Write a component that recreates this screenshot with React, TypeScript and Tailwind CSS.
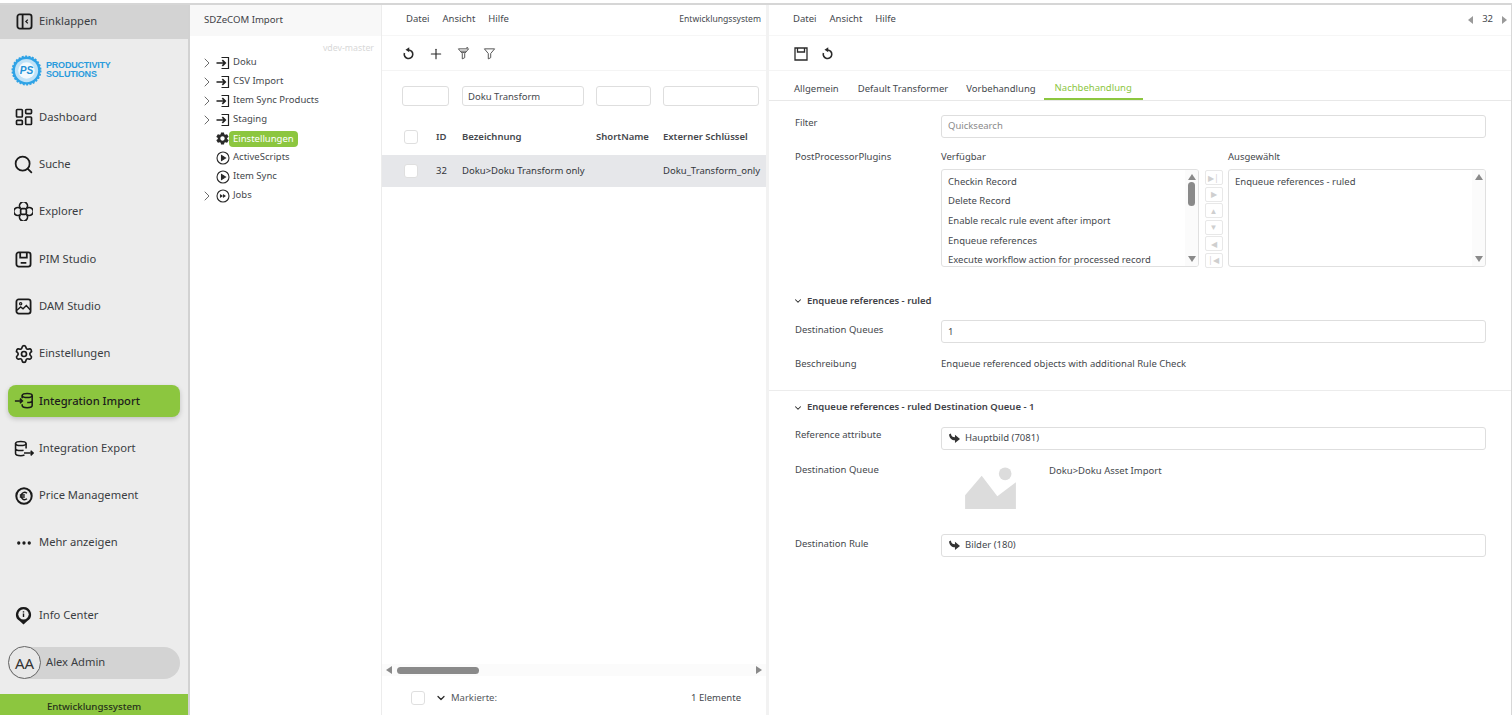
import React from 'react';
import { ChevronDown, ChevronRight, Ellipsis, LayoutDashboard, Plus, Search, Settings } from 'lucide-react';
import { IoMdSettings } from 'react-icons/io';

const FONT = "font-['Noto_Sans','Open_Sans',sans-serif]";

const PanelIcon = () => (
  <svg viewBox="0 0 18 18" className="w-[17px] h-[17px]" fill="none" stroke="#1a1a1a" strokeWidth="1.9">
    <rect x="1.5" y="1.5" width="15" height="15" rx="2.5" />
    <path d="M7 2v14" />
    <path d="M12.5 7 10.5 9l2 2" strokeWidth="1.4" />
  </svg>
);

const ExplorerIcon = () => (
  <svg viewBox="0 0 20 20" className="w-[19px] h-[19px]" fill="none" stroke="#1a1a1a" strokeWidth="1.8">
    <path d="M7 7A4.200 4.200 0 1 1 13 7 4.200 4.200 0 1 1 13 13 4.200 4.200 0 1 1 7 13 4.200 4.200 0 1 1 7 7Z" />
    <rect x="7" y="7" width="6" height="6" rx="1.500" />
  </svg>
);

const PimIcon = () => (
  <svg viewBox="0 0 18 18" className="w-[17px] h-[17px]" fill="none" stroke="#1a1a1a" strokeWidth="1.9">
    <rect x="1.5" y="1.5" width="15" height="15" rx="2.5" />
    <path d="M5.5 2v5h7V2M6 12.5h6" />
  </svg>
);

const DamIcon = () => (
  <svg viewBox="0 0 18 18" className="w-[17px] h-[17px]" fill="none" stroke="#1a1a1a" strokeWidth="1.9">
    <rect x="1.5" y="1.5" width="15" height="15" rx="2.5" />
    <circle cx="6" cy="6" r="1.2" strokeWidth="1.3" />
    <path d="m2 13 4-3.5 2.5 2L12 8l4 4.5" strokeWidth="1.5" />
  </svg>
);

const ImportIcon = () => (
  <svg viewBox="0 0 22 18" className="w-[20px] h-[17px]" fill="none" stroke="#1a1a1a" strokeWidth="1.7">
    <ellipse cx="14.5" cy="3.5" rx="5.5" ry="2.3" />
    <path d="M9 3.5v3M20 3.5v11c0 1.4-2.5 2.4-5.5 2.4S9 15.9 9 14.5v-1.5M20 9c0 1.3-2.5 2.3-5.5 2.3" />
    <path d="M1 9.5h8M6.5 7l2.7 2.5L6.500 12" />
  </svg>
);

const ExportIcon = () => (
  <svg viewBox="0 0 22 18" className="w-[20px] h-[17px]" fill="none" stroke="#1a1a1a" strokeWidth="1.7">
    <ellipse cx="7.5" cy="3.5" rx="5.8" ry="2.3" />
    <path d="M1.7 3.5v11c0 1.4 2.6 2.4 5.8 2.4 1.600 0 3-.3 4-.7M13.3 3.5V9M1.7 9c0 1.3 2.6 2.3 5.8 2.3 1.200 0 2.200-.1 3-.4" />
    <path d="M11 14h10M18.300 11.500 21 14l-2.700 2.500" />
  </svg>
);

const EuroIcon = () => (
  <svg viewBox="0 0 18 18" className="w-[18px] h-[18px]" fill="none" stroke="#1a1a1a">
    <circle cx="9" cy="9" r="7.700" strokeWidth="2" />
    <path d="M12 6.200a3.600 3.600 0 1 0 0 5.600M4.800 8h5M4.800 10h5" strokeWidth="1.300" />
  </svg>
);

const InfoPin = () => (
  <svg viewBox="0 0 18 20" className="w-[17px] h-[19px]" fill="none">
    <path d="M9 1a8 8 0 0 0-4 14.900L9 19.500l4-3.600A8 8 0 0 0 9 1Z" fill="#1a1a1a" />
    <circle cx="9" cy="8.800" r="5.500" fill="#ececec" />
    <path d="M9 8v3.700M9 5.500v1.200" stroke="#1a1a1a" strokeWidth="1.500" />
  </svg>
);

const RefreshIcon = () => (
  <svg viewBox="0 0 14 14" className="w-[13px] h-[13px]" fill="none" stroke="#2a2a2a" strokeWidth="1.700">
    <path d="M7 3.200a4.600 4.600 0 1 1-4.400 3.300" />
    <path d="M7.800 .3v5.400L3.800 3Z" fill="#2a2a2a" stroke="none" />
  </svg>
);

const SaveIcon = () => (
  <svg viewBox="0 0 14 14" className="w-[14px] h-[14px]" fill="none" stroke="#2a2a2a" strokeWidth="1.300">
    <path d="M1 1h12v12H1Z" />
    <path d="M3.500 1v4h7V1" />
  </svg>
);

const Logo = () => (
  <div className="flex items-center gap-[4px] pl-[11px]">
    <svg viewBox="0 0 32 32" className="w-[31px] h-[31px]">
      <circle cx="16" cy="16" r="14.500" fill="#2fa3e6" stroke="#2fa3e6" strokeWidth="2" strokeDasharray="2 1.500" />
      <circle cx="16" cy="16" r="12" fill="#bfe2f7" />
      <circle cx="16" cy="16" r="8.500" fill="#f2f9fd" />
      <text x="16" y="20" textAnchor="middle" fontSize="10.500" fontWeight="700" fontStyle="italic" fill="#2291d6" fontFamily="Liberation Sans, sans-serif">PS</text>
    </svg>
    <div className="font-['Liberation_Sans',sans-serif] text-[9px] leading-[9px] tracking-[-0.2px] font-bold text-[#2a9bdc]">
      <div>PRODUCTIVITY</div>
      <div>SOLUTIONS</div>
    </div>
  </div>
);

const NAV_ITEMS: { label: string; icon: React.ReactNode; active?: boolean }[] = [
  { label: 'Dashboard', icon: <LayoutDashboard size={20} strokeWidth={2} color="#1a1a1a" /> },
  { label: 'Suche', icon: <Search size={21} strokeWidth={2} color="#1a1a1a" /> },
  { label: 'Explorer', icon: <ExplorerIcon /> },
  { label: 'PIM Studio', icon: <PimIcon /> },
  { label: 'DAM Studio', icon: <DamIcon /> },
  { label: 'Einstellungen', icon: <Settings size={20} strokeWidth={2} color="#1a1a1a" /> },
  { label: 'Integration Import', icon: <ImportIcon />, active: true },
  { label: 'Integration Export', icon: <ExportIcon /> },
  { label: 'Price Management', icon: <EuroIcon /> },
  { label: 'Mehr anzeigen', icon: <Ellipsis size={18} strokeWidth={2.4} color="#1a1a1a" /> },
];

const NavItem = ({ label, icon, active }: { label: string; icon: React.ReactNode; active?: boolean }) => (
  <div className="h-[47.3px] flex items-center px-2 shrink-0">
    <div
      className={`flex items-center h-8 w-full rounded-lg ${
        active ? 'bg-[#8cc63f] shadow-[0_2px_5px_rgba(0,0,0,0.18)] font-medium text-[#1c1c1c]' : 'text-[#3a3d42]'
      }`}
    >
      <span className="w-[31px] flex justify-center shrink-0">{icon}</span>
      <span className="text-[11.2px]">{label}</span>
    </div>
  </div>
);

const Sidebar = () => (
  <aside className="w-[190px] shrink-0 bg-[#ececec] border-r-2 border-[#d2d2d2] flex flex-col">
    <div className="h-[33.5px] bg-[#d3d3d3] flex items-center pl-[16px] gap-[6px] text-[11.2px] text-[#3a3d42] shrink-0">
      <PanelIcon />
      <span>Einklappen</span>
    </div>
    <div className="h-[55px] pt-[8px] flex items-center shrink-0">
      <Logo />
    </div>
    {NAV_ITEMS.map((item) => (
      <NavItem key={item.label} {...item} />
    ))}
    <div className="mt-[25px]">
      <NavItem label="Info Center" icon={<InfoPin />} />
    </div>
    <div className="mt-[8px] mx-2 h-8 rounded-full bg-[#d3d3d3] flex items-center shrink-0">
      <span className="w-[33px] h-[33px] rounded-full border border-[#666] flex items-center justify-center text-[15px] text-[#333] shrink-0 bg-[#e8e8e8]">
        AA
      </span>
      <span className="ml-[5px] text-[11.2px] text-[#3a3d42]">Alex Admin</span>
    </div>
    <div className="mt-auto h-[21px] pt-[5px] bg-[#8cc63f] flex items-center justify-center text-[9.7px] font-medium text-[#26301a] shrink-0">
      Entwicklungssystem
    </div>
  </aside>
);

const TREE: { label: string; icon: 'in' | 'gear' | 'play' | 'ff'; arrow?: boolean; active?: boolean }[] = [
  { label: 'Doku', icon: 'in', arrow: true },
  { label: 'CSV Import', icon: 'in', arrow: true },
  { label: 'Item Sync Products', icon: 'in', arrow: true },
  { label: 'Staging', icon: 'in', arrow: true },
  { label: 'Einstellungen', icon: 'gear', active: true },
  { label: 'ActiveScripts', icon: 'play' },
  { label: 'Item Sync', icon: 'play' },
  { label: 'Jobs', icon: 'ff', arrow: true },
];

const TreeIcon = ({ type }: { type: string }) => {
  if (type === 'in')
    return (
      <svg viewBox="0 0 14 14" className="w-[14px] h-[14px]" fill="none" stroke="#222">
        <path d="M5.500 1.500h7v11h-7" strokeWidth="1.200" />
        <path d="M.5 7h8.500M6.300 4.200 9.200 7l-2.900 2.800" strokeWidth="1.700" />
      </svg>
    );
  if (type === 'gear') return <IoMdSettings size={17} color="#2a2a2a" />;
  return (
    <svg viewBox="0 0 14 14" className="w-[14px] h-[14px]" fill="none" stroke="#2a2a2a" strokeWidth="1.100">
      <circle cx="7" cy="7" r="6" />
      {type === 'play' ? (
        <path d="M5.500 4.500 9.500 7l-4 2.500Z" fill="#2a2a2a" />
      ) : (
        <path d="M4.500 6 6 7 4.500 8ZM7.500 6 9 7 7.500 8Z" fill="#2a2a2a" />
      )}
    </svg>
  );
};

const TreePanel = () => (
  <section className="w-[192px] shrink-0 bg-white border-r border-[#ececec] flex flex-col">
    <div className="h-[31px] bg-[#f8f8f8] flex items-center pl-[14px] text-[9.6px] text-[#3f4247] shrink-0">
      SDZeCOM Import
    </div>
    <div className="h-[19px] flex items-end justify-end pr-[7px] text-[8.8px] text-[#d8d8d8] shrink-0">vdev-master</div>
    <ul className="-mt-[2px] pl-[13px]">
      {TREE.map((node) => (
        <li key={node.label} className="h-[19px] flex items-center text-[9.500px] text-[#45484d]">
          <span className="w-[12px] flex justify-start shrink-0">
            {node.arrow && <ChevronRight size={16} strokeWidth={1.300} color="#555" className="-ml-[4px]" />}
          </span>
          <span className="w-[15px] flex justify-center shrink-0">
            <TreeIcon type={node.icon} />
          </span>
          <span
            className={
              node.active
                ? '-ml-[1px] px-1 h-[16px] leading-[16px] rounded-sm bg-[#8cc63f] text-white'
                : 'ml-[3px]'
            }
          >
            {node.label}
          </span>
        </li>
      ))}
    </ul>
  </section>
);

const Checkbox = ({ className = '' }: { className?: string }) => (
  <span className={`block w-[14px] h-[14px] rounded-[3px] bg-white border border-[#dfdfdf] ${className}`} />
);

const MenuBar = ({ right }: { right: React.ReactNode }) => (
  <div className="h-[31px] pb-[1px] flex items-center justify-between border-b border-[#f6f6f6] text-[9.500px] text-[#45484d] shrink-0">
    <div className="flex gap-[13px] pl-[24px]">
      <span>Datei</span>
      <span>Ansicht</span>
      <span>Hilfe</span>
    </div>
    {right}
  </div>
);

const FilterIcon = ({ spark }: { spark?: boolean }) => (
  <svg viewBox="0 0 14 14" className="w-[13px] h-[13px]" fill="none" stroke="#4a4a4a" strokeWidth="1">
    <path d="M1.500 2h11L8.300 7v4.500l-2.600 1.300V7Z" />
    {spark && <path d="M4 4.500h6M5.500 6h3M10 1l2-1" />}
  </svg>
);

const TABLE_COLS = 'grid grid-cols-[80px_134px_67px_1fr] items-center';

const ListPanel = () => (
  <section className="w-[384px] shrink-0 bg-white flex flex-col">
    <MenuBar right={<span className="pr-[5px] text-[8.600px]">Entwicklungssystem</span>} />
    <div className="h-[35px] pt-[1px] flex items-center gap-[13px] pl-[20px] border-b border-[#f4f4f4] shrink-0">
      <RefreshIcon />
      <Plus size={16} strokeWidth={1.700} color="#2a2a2a" />
      <FilterIcon spark />
      <FilterIcon />
    </div>
    <div className={`${TABLE_COLS} pt-[13px] shrink-0`}>
      <div className="pl-[20px]">
        <input className="w-[47px] h-[20px] rounded-[3px] border border-[#dedede] bg-white" />
      </div>
      <input
        readOnly
        value="Doku Transform"
        className="w-[122px] h-[20px] rounded-[3px] border border-[#dedede] px-[5px] text-[9.500px] text-[#45484d] outline-none"
      />
      <input className="w-[55px] h-[20px] rounded-[3px] border border-[#dedede]" />
      <input className="w-[96px] h-[20px] rounded-[3px] border border-[#dedede]" />
    </div>
    <div className={`${TABLE_COLS} h-[47px] pt-[11px] text-[9.500px] font-semibold text-[#45484d] shrink-0`}>
      <div className="flex items-center pl-[22px] gap-[18px]">
        <Checkbox />
        <span>ID</span>
      </div>
      <span>Bezeichnung</span>
      <span>ShortName</span>
      <span>Externer Schlüssel</span>
    </div>
    <div className={`${TABLE_COLS} h-[32px] bg-[#e6e7ea] text-[9.500px] text-[#33363b] shrink-0`}>
      <div className="flex items-center pl-[22px] gap-[18px]">
        <Checkbox />
        <span>32</span>
      </div>
      <span>Doku&gt;Doku Transform only</span>
      <span />
      <span>Doku_Transform_only</span>
    </div>
    <div className="flex-1" />
    <div className="h-[12px] flex items-center gap-[5px] px-1 bg-[#fbfbfb] shrink-0">
      <span className="w-0 h-0 border-y-[4px] border-y-transparent border-r-[6px] border-r-[#8a8a8a]" />
      <span className="w-[82px] h-[7px] rounded-full bg-[#8a8a8a]" />
      <span className="flex-1" />
      <span className="w-0 h-0 border-y-[4px] border-y-transparent border-l-[6px] border-l-[#8a8a8a]" />
    </div>
    <div className="h-[39px] pt-[5px] flex items-center pl-[29px] pr-[25px] text-[9.500px] text-[#55585d] shrink-0">
      <Checkbox />
      <ChevronDown size={12} strokeWidth={2.500} color="#2a2a2a" className="ml-[10px]" />
      <span className="ml-[4px]">Markierte:</span>
      <span className="ml-auto text-[#45484d]">1 Elemente</span>
    </div>
  </section>
);

const Label = ({ children, className = '' }: { children: React.ReactNode; className?: string }) => (
  <div className={`w-[146px] shrink-0 text-[9.500px] text-[#45484d] ${className}`}>{children}</div>
);

const TextBox = ({ children, muted }: { children?: React.ReactNode; muted?: boolean }) => (
  <div
    className={`flex-1 h-[23px] rounded-[3px] border border-[#dedede] flex items-center px-[6px] text-[9.500px] ${
      muted ? 'text-[#8a8a8a]' : 'text-[#45484d]'
    }`}
  >
    {children}
  </div>
);

const RefArrow = () => (
  <svg viewBox="0 0 14 12" className="w-[13px] h-[11px] mr-[4px]" fill="#333">
    <path d="M1 1.500 3 .5c.5 3 1.800 4 4.500 4.200V2L13 6.500 7.500 11V8C4 8 1.500 5.500 1 1.500Z" />
  </svg>
);

const Triangle = ({ dir }: { dir: 'up' | 'down' }) => (
  <span
    className={`w-0 h-0 border-x-[4px] border-x-transparent ${
      dir === 'up' ? 'border-b-[6px] border-b-[#8a8a8a]' : 'border-t-[6px] border-t-[#8a8a8a]'
    }`}
  />
);

const PLUGINS = [
  'Checkin Record',
  'Delete Record',
  'Enable recalc rule event after import',
  'Enqueue references',
  'Execute workflow action for processed record',
];

const ListBox = ({ items, thumb }: { items: string[]; thumb?: boolean }) => (
  <div className="h-[98px] rounded-[3px] border border-[#e0e0e0] flex overflow-hidden text-[9.500px] text-[#45484d]">
    <div className="flex-1 pl-[6px] pt-[2px]">
      {items.map((item) => (
        <div key={item} className="h-[19.700px] flex items-center">
          {item}
        </div>
      ))}
    </div>
    <div className="w-[13px] bg-[#fbfbfb] flex flex-col items-center justify-between py-[4px]">
      <Triangle dir="up" />
      {thumb && <span className="w-[7px] h-[24px] rounded-full bg-[#8a8a8a] mb-auto mt-[2px]" />}
      <Triangle dir="down" />
    </div>
  </div>
);

const MoveButton = ({ glyph }: { glyph: string }) => (
  <span className="w-[18px] h-[15px] rounded-[2px] border border-[#e8e8e8] flex items-center justify-center text-[8px] leading-none text-[#cfcfcf]">
    {glyph}
  </span>
);

const SectionTitle = ({ children }: { children: React.ReactNode }) => (
  <div className="flex items-center gap-[4px] -ml-[2px] text-[9.500px] font-semibold text-[#3f4247]">
    <ChevronDown size={10} strokeWidth={2.500} color="#2a2a2a" />
    <span>{children}</span>
  </div>
);

const DetailPanel = () => (
  <section className="flex-1 bg-white border-l-[3px] border-[#f2f2f2] border-r border-r-[#d8d8d8] flex flex-col">
    <MenuBar
      right={
        <div className="flex items-center gap-[9px] pr-[4px] text-[9.500px]">
          <span className="w-0 h-0 border-y-[4px] border-y-transparent border-r-[5px] border-r-[#9a9a9a]" />
          <span>32</span>
          <span className="w-0 h-0 border-y-[4px] border-y-transparent border-l-[5px] border-l-[#9a9a9a]" />
        </div>
      }
    />
    <div className="h-[35px] pt-[1px] flex items-center gap-[13px] pl-[25px] border-b border-[#f4f4f4] shrink-0">
      <SaveIcon />
      <RefreshIcon />
    </div>
    <div className="h-[30px] flex items-end pl-[16px] border-b border-[#e8e8e8] text-[9.500px] text-[#45484d] shrink-0">
      <span className="h-full flex items-center pt-[7px] px-[9px]">Allgemein</span>
      <span className="h-full flex items-center pt-[7px] px-[9px] ml-[1px]">Default Transformer</span>
      <span className="h-full flex items-center pt-[7px] px-[9px]">Vorbehandlung</span>
      <span className="h-full flex items-center pt-[7px] px-[11px] -ml-[1px] text-[#8cc63f] border-b-2 border-[#8cc63f]">Nachbehandlung</span>
    </div>

    <div className="pl-[26px] pr-[25px] pt-[14px]">
      <div className="flex items-start">
        <Label className="pt-[1px]">Filter</Label>
        <TextBox muted>Quicksearch</TextBox>
      </div>
      <div className="flex items-start mt-[12px]">
        <Label>PostProcessorPlugins</Label>
        <div className="flex-1 grid grid-cols-[258px_29px_1fr]">
          <div className="text-[9.500px] text-[#45484d] h-[19px]">Verfügbar</div>
          <div />
          <div className="text-[9.500px] text-[#45484d] h-[19px]">Ausgewählt</div>
          <ListBox items={PLUGINS} thumb />
          <div className="flex flex-col items-center gap-[1.600px] pt-[1px]">
            <MoveButton glyph="▶|" />
            <MoveButton glyph="▶" />
            <MoveButton glyph="▲" />
            <MoveButton glyph="▼" />
            <MoveButton glyph="◀" />
            <MoveButton glyph="|◀" />
          </div>
          <ListBox items={['Enqueue references - ruled']} />
        </div>
      </div>
    </div>

    <div className="pl-[26px] pr-[25px] pt-[26px] pb-[19px] border-b border-[#ececec]">
      <SectionTitle>Enqueue references - ruled</SectionTitle>
      <div className="flex items-start mt-[12px]">
        <Label className="pt-[3px]">Destination Queues</Label>
        <TextBox>1</TextBox>
      </div>
      <div className="flex items-start mt-[14px] text-[9.500px] text-[#45484d]">
        <Label>Beschreibung</Label>
        <span>Enqueue referenced objects with additional Rule Check</span>
      </div>
    </div>

    <div className="pl-[26px] pr-[25px] pt-[9px]">
      <SectionTitle>Enqueue references - ruled Destination Queue - 1</SectionTitle>
      <div className="flex items-start mt-[12px]">
        <Label className="pt-[1px]">Reference attribute</Label>
        <TextBox>
          <RefArrow />
          Hauptbild (7081)
        </TextBox>
      </div>
      <div className="flex items-start mt-[13px] h-[71px]">
        <Label>Destination Queue</Label>
        <svg viewBox="0 0 52 44" className="w-[51px] h-[43px] ml-[24px] mt-[4px] shrink-0" fill="#dcdcdc">
          <circle cx="41" cy="7" r="6.500" />
          <path d="M0 43V29L17 9l16 21 19-14.500V43Z" />
        </svg>
        <span className="ml-[33px] mt-[1px] text-[9.500px] text-[#45484d]">Doku&gt;Doku Asset Import</span>
      </div>
      <div className="flex items-start">
        <Label className="pt-[3px]">Destination Rule</Label>
        <TextBox>
          <RefArrow />
          Bilder (180)
        </TextBox>
      </div>
    </div>
  </section>
);

export default function App() {
  return (
    <div className={`${FONT} w-[1512px] h-[715px] overflow-hidden bg-white pt-[3px] flex flex-col`}>
      <div className="h-[2px] bg-[#d6d6d6] shrink-0" />
      <div className="flex-1 min-h-0 flex">
        <Sidebar />
        <TreePanel />
        <ListPanel />
        <DetailPanel />
      </div>
    </div>
  );
}
